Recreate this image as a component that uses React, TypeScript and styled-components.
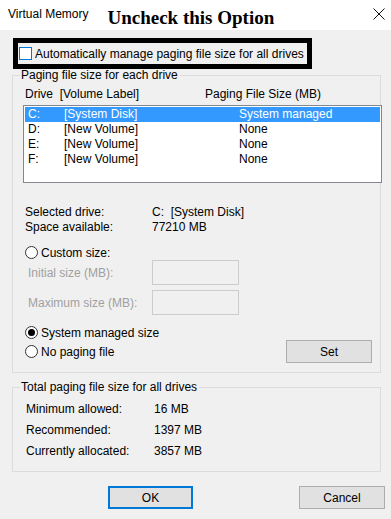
import React from "react";
import styled, { createGlobalStyle } from "styled-components";

const Global = createGlobalStyle`
  html, body { margin: 0; padding: 0; background: #f0f0f0; }
  body { font-family: "Liberation Sans", Arial, sans-serif; font-size: 12px; color: #000; }
  * { box-sizing: border-box; }
`;

const Window = styled.div`
  width: 391px;
  height: 519px;
  background: #f0f0f0;
  display: flex;
  flex-direction: column;
  overflow: hidden;
`;

const TitleBar = styled.div`
  height: 30px;
  background: #fff;
  display: flex;
  align-items: center;
  padding: 0 6px 0 8px;
`;

const TitleText = styled.span`
  font-size: 12px;
  line-height: 15px;
  margin-top: -2px;
`;

const Annotation = styled.span`
  font-family: "Liberation Serif", "Times New Roman", serif;
  font-weight: bold;
  font-size: 19px;
  margin-left: 19px;
  margin-top: 5px;
`;

const CloseBtn = styled.span`
  margin-left: auto;
  width: 12px;
  height: 12px;
  display: flex;
  margin-top: -2px;
`;

const Body = styled.div`
  display: flex;
  flex-direction: column;
  padding: 8px 0 0 12px;
`;

const Highlight = styled.div`
  margin-left: 1px;
  width: 299px;
  height: 31px;
  border: 5px solid #000;
  display: flex;
  align-items: center;
  padding-left: 1px;
  gap: 3px;
`;

const CheckBox = styled.span`
  width: 13px;
  height: 13px;
  border: 1px solid #0078d7;
  background: #fff;
  flex-shrink: 0;
`;

const Group = styled.fieldset<{ $h: number; $mt: number }>`
  margin: ${(p) => p.$mt}px 0 0 0;
  padding: 0;
  width: 369px;
  height: ${(p) => p.$h}px;
  border: 1px solid #dcdcdc;
  display: flex;
  flex-direction: column;
  min-width: 0;
`;

const Legend = styled.legend`
  margin-left: 7px;
  padding: 0 2px 0 1px;
  line-height: 15px;
  font-size: 12px;
`;

const HeaderRow = styled.div`
  display: flex;
  line-height: 15px;
  margin: 4px 0 0 12px;
`;

const HeaderCell = styled.span<{ $w?: number }>`
  width: ${(p) => (p.$w ? `${p.$w}px` : "auto")};
`;

const ListBox = styled.div`
  margin: 3px 0 0 10px;
  width: 359px;
  height: 78px;
  border: 1px solid #828790;
  background: #fff;
  padding: 1px;
  display: flex;
  flex-direction: column;
`;

const ListRow = styled.div<{ $sel?: boolean }>`
  display: flex;
  height: 15px;
  line-height: 15px;
  background: ${(p) => (p.$sel ? "#3399ff" : "transparent")};
  color: ${(p) => (p.$sel ? "#fff" : "#000")};
  padding-left: 3px;
`;

const ListCell = styled.span<{ $w: number }>`
  width: ${(p) => p.$w}px;
  white-space: nowrap;
`;

const InfoBlock = styled.div`
  display: flex;
  flex-direction: column;
  margin: 22px 0 0 12px;
`;

const InfoRow = styled.div`
  display: flex;
  line-height: 15px;
`;

const InfoLabel = styled.span<{ $w: number }>`
  width: ${(p) => p.$w}px;
`;

const RadioRow = styled.div<{ $mt: number }>`
  display: flex;
  align-items: center;
  gap: 3px;
  margin: ${(p) => p.$mt}px 0 0 12px;
  height: 15px;
`;

const Radio = styled.span<{ $on?: boolean }>`
  width: 13px;
  height: 13px;
  border-radius: 50%;
  border: 1px solid #333;
  background: #fff;
  display: flex;
  align-items: center;
  justify-content: center;
  flex-shrink: 0;
  &::after {
    content: "";
    display: ${(p) => (p.$on ? "block" : "none")};
    width: 7px;
    height: 7px;
    border-radius: 50%;
    background: #000;
  }
`;

const SizeRow = styled.div<{ $mt: number }>`
  display: flex;
  align-items: center;
  margin: ${(p) => p.$mt}px 0 0 15px;
`;

const DisabledLabel = styled.span`
  color: #a0a0a0;
  width: 124px;
`;

const SizeInput = styled.div`
  width: 87px;
  height: 25px;
  border: 1px solid #cccccc;
  background: #f0f0f0;
`;

const LastRow = styled.div`
  display: flex;
  align-items: center;
  gap: 3px;
  margin: 0 8px 0 12px;
`;

const Button = styled.button<{ $primary?: boolean; $w: number }>`
  width: ${(p) => p.$w}px;
  height: 23px;
  font-family: inherit;
  font-size: 12px;
  color: #000;
  background: #e1e1e1;
  border: ${(p) => (p.$primary ? "2px solid #0078d7" : "1px solid #adadad")};
  padding: 0;
  margin-left: auto;
`;

const TotalRow = styled.div<{ $mt: number }>`
  display: flex;
  line-height: 15px;
  margin: ${(p) => p.$mt}px 0 0 13px;
`;

const Footer = styled.div`
  display: flex;
  justify-content: flex-end;
  gap: 10px;
  margin: 14px 6px 0 0;
`;

const drives = [
  { d: "C:", l: "[System Disk]", s: "System managed" },
  { d: "D:", l: "[New Volume]", s: "None" },
  { d: "E:", l: "[New Volume]", s: "None" },
  { d: "F:", l: "[New Volume]", s: "None" },
];

export default function App() {
  return (
    <Window>
      <Global />
      <TitleBar>
        <TitleText>Virtual Memory</TitleText>
        <Annotation>Uncheck this Option</Annotation>
        <CloseBtn>
          <svg width="12" height="12" viewBox="0 0 12 12">
            <path d="M0.5 0.5 L11.5 11.5 M11.5 0.5 L0.5 11.5" stroke="#111" strokeWidth="1" />
          </svg>
        </CloseBtn>
      </TitleBar>
      <Body>
        <Highlight>
          <CheckBox />
          <span>Automatically manage paging file size for all drives</span>
        </Highlight>
        <Group $h={305} $mt={-1}>
          <Legend>Paging file size for each drive</Legend>
          <HeaderRow>
            <HeaderCell $w={180}>Drive&nbsp;&nbsp;[Volume Label]</HeaderCell>
            <HeaderCell>Paging File Size (MB)</HeaderCell>
          </HeaderRow>
          <ListBox>
            {drives.map((r, i) => (
              <ListRow key={r.d} $sel={i === 0}>
                <ListCell $w={36}>{r.d}</ListCell>
                <ListCell $w={175}>{r.l}</ListCell>
                <ListCell $w={140}>{r.s}</ListCell>
              </ListRow>
            ))}
          </ListBox>
          <InfoBlock>
            <InfoRow>
              <InfoLabel $w={127}>Selected drive:</InfoLabel>
              <span>C:&nbsp;&nbsp;[System Disk]</span>
            </InfoRow>
            <InfoRow>
              <InfoLabel $w={127}>Space available:</InfoLabel>
              <span>77210 MB</span>
            </InfoRow>
          </InfoBlock>
          <RadioRow $mt={10}>
            <Radio />
            <span>Custom size:</span>
          </RadioRow>
          <SizeRow $mt={0}>
            <DisabledLabel>Initial size (MB):</DisabledLabel>
            <SizeInput />
          </SizeRow>
          <SizeRow $mt={5}>
            <DisabledLabel>Maximum size (MB):</DisabledLabel>
            <SizeInput />
          </SizeRow>
          <RadioRow $mt={10}>
            <Radio $on />
            <span>System managed size</span>
          </RadioRow>
          <LastRow>
            <Radio />
            <span>No paging file</span>
            <Button $w={86}>Set</Button>
          </LastRow>
        </Group>
        <Group $h={92} $mt={7}>
          <Legend>Total paging file size for all drives</Legend>
          <TotalRow $mt={7}>
            <InfoLabel $w={128}>Minimum allowed:</InfoLabel>
            <span>16 MB</span>
          </TotalRow>
          <TotalRow $mt={6}>
            <InfoLabel $w={128}>Recommended:</InfoLabel>
            <span>1397 MB</span>
          </TotalRow>
          <TotalRow $mt={6}>
            <InfoLabel $w={128}>Currently allocated:</InfoLabel>
            <span>3857 MB</span>
          </TotalRow>
        </Group>
        <Footer>
          <Button $primary $w={85}>OK</Button>
          <Button $w={86}>Cancel</Button>
        </Footer>
      </Body>
    </Window>
  );
}
